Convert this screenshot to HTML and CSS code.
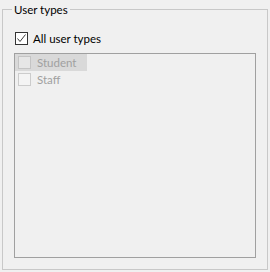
FILE: index.html
```html
<!doctype html>
<html>
  <head>
    <meta charset="utf-8">
    <link rel="stylesheet" href="styles.css">
  </head>
  <body>
    <fieldset class="group">
      <legend>User types</legend>
      <label class="check-row">
        <span class="box checked">
          <svg width="11" height="11" viewBox="0 0 11 11"><path d="M1.5 5.5 L4 8.5 L9.5 1.5" fill="none" stroke="#3c3c3c" stroke-width="1"/></svg>
        </span>
        <span>All user types</span>
      </label>
      <ul class="list">
        <li class="item selected"><span class="box"></span><span>Student</span></li>
        <li class="item"><span class="box"></span><span>Staff</span></li>
      </ul>
    </fieldset>
  </body>
</html>
```

FILE: styles.css
```css
body {
  margin: 0;
  background: #f0f0f0;
  font-family: Lato, "Noto Sans", sans-serif;
  font-size: 11.5px;
  color: #000;
}
.group {
  box-sizing: border-box;
  width: 266px;
  height: 270px;
  margin: 0 0 0 2px;
  padding: 0 11px;
  border: 1px solid #c8c8c8;
  display: flex;
  flex-direction: column;
}
.group legend {
  margin-left: -2px;
  padding: 0 2px;
  line-height: 19px;
}
.check-row {
  display: flex;
  align-items: center;
  height: 17px;
  margin-top: 11px;
  margin-left: 1px;
  gap: 5px;
}
.box {
  box-sizing: border-box;
  width: 13px;
  height: 13px;
  display: inline-flex;
  align-items: center;
  justify-content: center;
  flex-shrink: 0;
}
.box.checked {
  border: 1px solid #333;
  background: #fff;
}
.list {
  list-style: none;
  margin: 6px 0 0 0;
  padding: 0;
  height: 205px;
  box-sizing: border-box;
  border: 1px solid #a0a0a0;
  display: flex;
  flex-direction: column;
  align-items: flex-start;
}
.item {
  display: flex;
  align-items: center;
  height: 17px;
  padding: 0 10px 0 3px;
  gap: 6px;
  color: #a0a0a0;
}
.item .box {
  border: 1px solid #cccccc;
  background: #f4f4f4;
}
.item.selected {
  background: #d9d9d9;
}
.item.selected .box {
  background: #e6e6e6;
  border-color: #c4c4c4;
}
```
